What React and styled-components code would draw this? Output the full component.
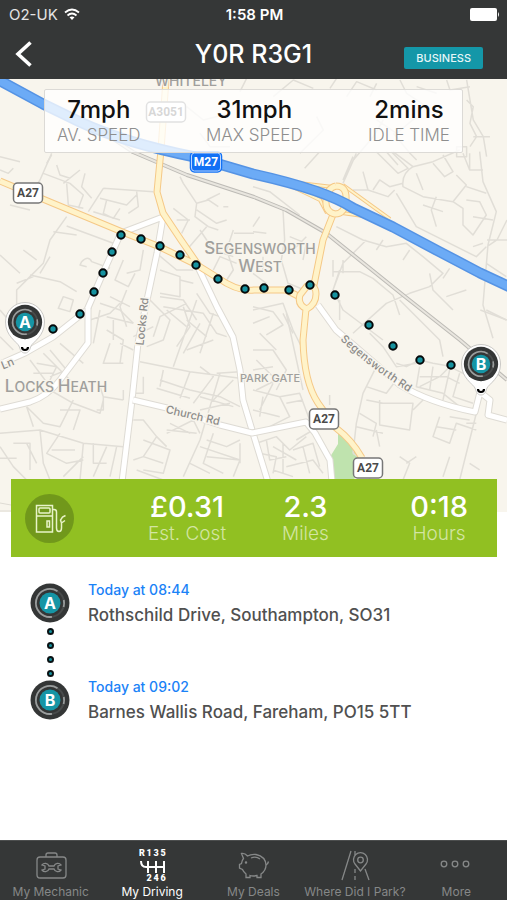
import React from "react";
import styled, { createGlobalStyle } from "styled-components";

const points = [
  [53, 329], [80, 314], [94, 292], [103, 273], [112, 252], [121, 235],
  [141, 239], [160, 246], [180, 255], [196, 265], [218, 279], [245, 289],
  [264, 288], [289, 290], [310, 285], [335, 295], [369, 325], [393, 346],
  [420, 360], [451, 365],
];

// small streets, each tile is drawn at three times the map scale
const tiles = [
  {
    x: 0,
    y: 0,
    d: "M720 275L740 235 M820 290L880 240L940 265 M990 265l20-30 M1040 290l30-45 60 25 M1130 250l-20 40 M1250 260l60 20 M1200 240l20 40 60 40 M1340 240l10 30 60-10 M1400 240l20 120 30 50 10 60 M1400 300l20 20-10 50 20 40-20 30 M1370 440h30v30h-30z M0 470l60 15 M140 490l15-25 M900 460l40-40 30-30-20-40 M1060 480l60-70 30-50 M1180 400l50 60 20 20 M1420 410l50 0 M1130 360l60 40 60-50 M560 320l50 40 80-20 M600 400l30 40 60 0",
  },
  {
    x: 0,
    y: 150,
    d: "M155 10L120 90L95 130 M170 45l10 30 30 10 M130 70l80 30 40 35-15 40 M240 60l-50 40 M0 60l25 10 15-15 M30 165l60 15 M200 100l5 65 45 10 M255 70l-10 40 30 35 M310 115L265 185 M310 115l150 10 M300 145l80 20 30-30 M410 125l5 45-30 20 M320 150l-10 40 30 15 20-30 M280 185l80 25 M200 200L150 270L130 340L90 380L50 420V480 M160 245l70 10 M200 228L340 280 M90 375l90 20 50 30 M0 315l60 55 M150 320l-30 50 M70 300l40 30 M245 335q20-20 30 0l55 20 M245 335l-5 10 20 5 M190 440l30 10-10 35-35-10z M370 330l-25 60 40 20 20-40 M430 300l-10 60-40 10 M480 360l60 20v60l-60-10 M540 390l40 10 M480 440l70 10 40 60 M560 460l-80 40-20 60 M500 480l60 50 M590 430l40 60 30 10 M380 420l-20 50 20 60 M330 440l60 30 M320 500l80 20 M540 80l10 20 40 60 35-10 30 20 M590 160l-5 40 40 30 30 10 M620 150l40-20 M670 170l15 0 M520 175l45 35-20 40 M570 210l-40 0 M600 240l40 60 60 20 M700 240l-20 60 20 60-20 30 M762 250h-60 M560 300l60-70 M640 360l20-40 50 20 M0 480l60 70 M50 400l50-20 M590 180l60 40 30-10 M400 560l60-30 M560 510l60 50 M470 310l60 50 50 0",
  },
  {
    x: 253,
    y: 150,
    d: "M200 5L155 55 M310 10L270 100 M300 20l-30 70 M370 5l65 65 30-15-50-50 M400 5l35 40 M420 5l60 45 60-15 80-35 M540 40l35 40 25-15-30-50 M630 10l20 50 40 0 M650 60l0-50 M330 65l15 55-45 0 M345 120l60 20 20-20 M360 120l20-30 30 20 40-10 M480 50q-35 20-30 60l60 30 90 15 40-50-30-30 M510 120l-20-50 M600 155l30 20 0 50 30 30 40-60-20-40-40-5 M640 110l60 20 M550 140l-15 40 15 50 M510 165l60 20 M660 200l60 10 M680 5l10 90 40 90-25 100-15 180 30 100 M430 130l60 100 180 90 30-30 M762 210l-30 60-30 20 M0 110l50 15 90 70 M20 200l-20 30 M0 245l40 5 M90 180l5 90-10 60 20 70 50 20 M110 260l50 20-10 50 M120 300l40-40 M250 230l80 40 70 20 60-10 50 40 60 50-40 40-60 20-70 30-100 90 M340 270l-70 70-30 80 M240 365h80l40 20 60 50 20 60 M240 330v50 M270 330v40 M260 360l-20 60 30 60 80 60 40 30 M530 370l10 50 60 60 M600 480l-20-20 M580 440l60-20 M570 385l20-30 M450 330l20-30 M370 300l20-30 M0 370l40 30 M700 340l60 40 M700 480l60 30 M762 270l-60 0 M30 320v40 M0 470l60 15 30 40-50 30 M0 520l50-20 M660 290l30-10 M90 490l30 60",
  },
  {
    x: 0,
    y: 300,
    d: "M300 30L280 130 M270 60l60-20 30-30 M300 10l60 20 40 40 M320 90l50 30-10 70 M330 130l-20 60 60 0 M340 60l0 60 M360 130l40 20 M0 110l40 40 M90 180l60 80 M110 190l60 10-20 40 M130 160l80 80 M150 150l50 60-50 20 M180 130l70 60 M100 220l60 0 M450 0l60 60-20 60-50 20 M550 20l20 60-40 60 M590 0L520 200 M490 20l120 20 40 60 30 10 M600 70l-50 90 M640 40l-40 120 M640 120l-80 30 M420 185l150 30 150 20 M480 240l90 30 90 20 60 30 M470 265l100 30 M570 215l-30 80 M490 210l-10 50 M430 230v50h-30 M600 200l40 30-60 80 M660 220L600 420L550 530 M650 220l70-5 M600 290l100 30 M600 330l90-20 M300 260l10 30 60 10 M370 270v30 M310 290l0 40-20 0 M150 270l70 40 80 30 10-40 M220 300l-40 80-50-10-50-50 M180 330l60 0-20 60 M80 320l20 60 M0 400L120 390L250 430L370 440 M120 390l10 100 20 50 M80 430l30 60 M0 440l40 60 40 40 M0 475l50 0 M40 430h50l0 80 M180 400l-40 60 60 30 50-10 M155 450h70 M250 430l-10 110 M280 430v60h40 M320 440l-40 90 M350 440l-20 90 M250 470l-60 60 M400 360l30 0 40 50-40 60-30 10 M430 420l80 30-20 70-60-10 M470 410l30 30 M430 470l60 20 M410 510l80 30 M500 400l80-40 20 40 M510 370l60 30 M500 390l90 10 M620 420l60 20 40-20 M600 440l120 40-20 50 M640 400l-30 90 60 30 M620 470l100 10 M720 430v60 M570 490l60 30 M700 240l-60 60",
  },
  {
    x: 253,
    y: 300,
    d: "M0 30l90-20 30 80 30 60 M0 150l60 0 40 60-30 60 M20 100l50 50 M10 180l60 60-60 30 M0 210l60-10 M0 270l80 20 30 60-60 30 M100 40l50 230 M60 250l-40 80 M0 330l80 20 M80 290l60-10 30 80 M20 350l10-60 M100 310l50-10 M10 430l60-20 40 40 50-40 M40 420l10 60 50-10 M60 440l70 40 M20 460l50 10-10 50 M90 430l0 90 M120 450l60-20 20 70 M100 500l80-20 30 40 M150 440l20 80 M60 510l60 20 M180 390l-50 30 M260 0l0 60 M230 285v30 M440 0l120 120 10 50 M350 100l40 40 40 60 60-10 M430 190l30 10 40-20 40 10 60 10 M370 200l-40 80-20 90-10 90 M340 260l60 20 30-40 M340 300l50 10 90 0-10 80-90-15 0-75 M500 200l-10 60 80 20 50 40 M500 230h80l40 20 M540 200l-10 70 M500 260l60-30 30-30 60 30 M590 210l-20 90 M620 220l-20 70 60 20 M560 350l-20 60 50 20 20-60 60 20 M550 380l60 10 M590 350l60 10 M310 380l80 20 M320 340l50 30-10 40 M370 390l10 50 M300 460l50 30 0 50 M440 470l30 20-20 50 M490 470l-30 20 M680 300l-60 240 M640 370h30 M590 470l-20 60 M650 490l30 20 M520 290l-40 40 M762 60l-80-30",
  },
];

const GlobalStyle = createGlobalStyle`
  * {
    box-sizing: border-box;
  }
  body {
    margin: 0;
    background-color: #ffffff;
    font-family: Inter, "Liberation Sans", sans-serif;
  }
`;

const Dial = () => (
  <>
    <circle r="19.5" fill="#343636" />
    <circle r="14" fill="none" stroke="#484b4b" strokeWidth="2" />
    <path
      d="M2 13.8A14 14 0 1 1 7.5 -11.8 M13.8 -3A14 14 0 0 1 13.6 4"
      fill="none"
      stroke="#9a9d9d"
      strokeWidth="1.8"
    />
    <circle r="10.5" fill="#1695a5" />
  </>
);

const Badge = ({ letter }) => (
  <BadgeIcon viewBox="-20 -20 40 40">
    <Dial />
    <PinText y="6">{letter}</PinText>
  </BadgeIcon>
);

const Pin = ({ x, y, letter }) => (
  <g transform={`translate(${x} ${y})`}>
    <path
      d="M0 31C-4 31-5 27-6 24C-8 20-19.5 14-19.5 0A19.5 19.5 0 0 1 19.5 0C19.5 14 8 20 6 24C5 27 4 31 0 31Z"
      fill="#ffffff"
      stroke="#c9c8c5"
      strokeWidth="1"
    />
    <g transform="scale(0.88)">
      <Dial />
    </g>
    <path d="M-3 25A3 3 0 0 0 3 25" fill="#fff" stroke="#000" strokeWidth="2.2" />
    <PinText y="6">{letter}</PinText>
  </g>
);

const Shield = ({ x, y, width = 29, motorway, children }) => (
  <g transform={`translate(${x} ${y})`}>
    <rect
      x={-width / 2}
      y="-10"
      width={width}
      height="20"
      rx="4"
      fill={motorway ? "#1271f5" : "#ffffff"}
      stroke={motorway ? "#1271f5" : "#777777"}
      strokeWidth="1.5"
    />
    {motorway && (
      <rect x={1 - width / 2} y="-9" width={width - 2} height="18" rx="3" fill="none" stroke="#b9d6ff" />
    )}
    <ShieldText y="4" $light={motorway}>
      {children}
    </ShieldText>
  </g>
);

// area names have a larger capital at the start of each word
const AreaName = ({ x, y, children }) => (
  <AreaText x={x} y={y} $size={14}>
    {children.split(" ").map((word, i) => (
      <React.Fragment key={word}>
        {i > 0 && " "}
        <tspan fontSize="17">{word[0]}</tspan>
        {word.slice(1)}
      </React.Fragment>
    ))}
  </AreaText>
);

const Road = ({ d, kind }) => {
  const looks = {
    motorway: ["#5593e4", 11, "#6cabf6", 8],
    main: ["#f5c886", 7, "#fff3c9", 5],
    slip: ["#f5c886", 4, "#fff3c9", 2],
    white: ["#dedbd4", 7, "#ffffff", 5],
    rail: ["#bdbbb6", 4, "#e9e6df", 2],
  };
  const [edge, edgeWidth, fill, width] = looks[kind];
  return (
    <g fill="none" strokeLinejoin="round">
      <path d={d} stroke={edge} strokeWidth={edgeWidth} />
      <path d={d} stroke={fill} strokeWidth={width} />
    </g>
  );
};

const RouteMap = () => (
  <MapDrawing viewBox="0 79 507 433" role="img" aria-label="Route map">
    <rect y="79" width="507" height="433" fill="#f8f5ed" />
    <path d="M338 432L362 455L354 480H333L330 457L338 444Z" fill="#bfe3ae" />
    {tiles.map(({ x, y, d }) => (
      <path
        key={`${x}-${y}`}
        d={d}
        transform={`translate(${x} ${y}) scale(0.3333)`}
        fill="none"
        stroke="#e1ded7"
        strokeWidth="4.5"
        strokeLinejoin="round"
      />
    ))}
    <path d="M0 511H11 M0 503L11 505" stroke="#dedbd4" fill="none" />
    <Road kind="rail" d="M100 130L133 152L187 175L254 197L286 210L326 233L403 295L460 340L507 380" />
    <Road kind="white" d="M121 233L163 217L157 253L147 300L138 343L132 400L122 482" />
    <Road kind="white" d="M120 235L103 273L87 310L53 337L25 353L0 364" />
    <Road kind="white" d="M88 308V343L60 380Q48 396 30 402L0 409" />
    <Road kind="white" d="M197 265L217 307L233 337L240 370L243 400L252 430L268 482" />
    <Road kind="white" d="M133 400L167 408L220 425L252 433L306 422L315 433L330 460L332 482" />
    <Road kind="white" d="M318 305L336 330L400 385Q430 403 475 412L480 392L490 400L488 415L507 420" />
    <Road kind="slip" d="M290 182L333 187 M343 185L390 219 M293 187L320 200L327 213 M342 213L363 216L395 226" />
    <Road
      kind="main"
      d="M166 79L161 150L157 192L163 213L181 240L199 266 M0 181L50 202L120 231L160 247L197 265L218 278Q238 292 254 290L286 290L300 297 M334 212L323 240L314 285"
    />
    <Road
      kind="main"
      d="M307 286Q316 284 316 294T307 309Q297 305 300 295Z M336 186Q347 186 346 200T335 214Q325 212 326 200T336 186 M306 309L303 340Q304 382 318 403L336 428Q352 440 362 458"
    />
    <Road
      kind="motorway"
      d="M-5 78L43 104L80 122Q125 143 195 157L253 174Q325 190 353 208L393 227L440 252L480 273L510 287"
    />

    <AreaText x="191" y="86" $size={14}>WHITELEY</AreaText>
    <AreaName x={260} y={254}>SEGENSWORTH</AreaName>
    <AreaName x={260} y={272}>WEST</AreaName>
    <AreaName x={56} y={392}>LOCKS HEATH</AreaName>
    <AreaText x="270" y="382" $size={11}>PARK GATE</AreaText>
    <RoadText transform="translate(146 322) rotate(-84)">Locks Rd</RoadText>
    <RoadText transform="translate(192 419) rotate(13)">Church Rd</RoadText>
    <RoadText transform="translate(9 367) rotate(-22)">Ln</RoadText>
    <path id="segensworth" d="M335 335Q366 366 415 396" fill="none" />
    <RoadText>
      <textPath href="#segensworth" startOffset="50%">Segensworth Rd</textPath>
    </RoadText>

    <Shield x={28} y={193}>A27</Shield>
    <Shield x={324} y={419}>A27</Shield>
    <Shield x={368} y={468}>A27</Shield>
    <Shield x={166} y={112} width={39}>A3051</Shield>
    <Shield x={206} y={162} width={31} motorway>M27</Shield>

    {points.map(([x, y]) => (
      <circle key={x} cx={x} cy={y} r="3.7" fill="#16929f" stroke="#05090a" strokeWidth="2" />
    ))}
    <Pin x={25} y={322} letter="A" />
    <Pin x={481} y={364} letter="B" />
  </MapDrawing>
);

const MechanicIcon = () => (
  <TabIcon viewBox="0 0 40 36">
    <rect x="6" y="10" width="29" height="21" rx="3" />
    <path d="M15 10V8Q15 6 17 6H24Q26 6 26 8V10" />
    <path d="M11 18A4 4 0 0 1 18 19H23A4 4 0 0 1 30 18L27 19V22L30 23A4 4 0 0 1 23 22H18A4 4 0 0 1 11 23L14 22V19Z" />
  </TabIcon>
);

const DrivingIcon = () => (
  <TabIcon viewBox="0 0 40 36">
    <path d="M9 14Q9 20 14 20H32 M16 14V26 M24 14V26 M32 14V26" strokeWidth="2" />
    <GearText x="10" y="9">R</GearText>
    <GearText x="17" y="9">1</GearText>
    <GearText x="24" y="9">3</GearText>
    <GearText x="31" y="9">5</GearText>
    <GearText x="17" y="34">2</GearText>
    <GearText x="24" y="34">4</GearText>
    <GearText x="31" y="34">6</GearText>
  </TabIcon>
);

const DealsIcon = () => (
  <TabIcon viewBox="0 0 40 36">
    <path d="M10.5 11.5L8.5 6.5Q12 6 14.5 9Q18 7 23 7.5Q32.5 9.5 33 18Q33 23.5 28 27V30.5H24V28.5Q20 29.5 17 28.5V30.5H13V27Q10.5 25 9.5 22.5L6.5 21V17.5L8.5 16.5Q8.8 13.5 10.5 11.5Z" />
    <path d="M18 11Q23 9 27 12 M33 18Q35 17 35.5 14.5" />
    <circle cx="13" cy="15.5" r="0.6" />
  </TabIcon>
);

const ParkIcon = () => (
  <TabIcon viewBox="0 0 40 36">
    <path d="M16 4L7 33 M20 4V8 M20 22V26 M20 29V33 M30 22L34 33" />
    <path d="M25.5 24L20 17A7 7 0 1 1 31 17Z" />
    <circle cx="25.5" cy="13" r="2.8" />
  </TabIcon>
);

const MoreIcon = () => (
  <TabIcon viewBox="0 0 40 36">
    <circle cx="8" cy="17" r="2.8" />
    <circle cx="19" cy="17" r="2.8" />
    <circle cx="30" cy="17" r="2.8" />
  </TabIcon>
);

const tabs = [
  { name: "My Mechanic", Icon: MechanicIcon },
  { name: "My Driving", Icon: DrivingIcon, active: true },
  { name: "My Deals", Icon: DealsIcon },
  { name: "Where Did I Park?", Icon: ParkIcon },
  { name: "More", Icon: MoreIcon },
];

const App = () => {
  return (
    <Wrapper>
      <GlobalStyle />
      <Header>
        <StatusBar>
          <Carrier>
            O2-UK
            <svg width="16" height="13" viewBox="0 0 16 13" fill="none" stroke="#fff" strokeWidth="1.8">
              <path d="M1 4.5Q8 -1.5 15 4.5 M3.5 7.5Q8 3.5 12.5 7.5" />
              <path d="M8 12L5.5 9.3Q8 7.5 10.5 9.3Z" fill="#fff" stroke="none" />
            </svg>
          </Carrier>
          <Clock>1:58 PM</Clock>
          <Battery width="30" height="13" viewBox="0 0 30 13" fill="#fff">
            <rect width="27" height="13" rx="2" />
            <path d="M28 4Q30 6.5 28 9Z" />
          </Battery>
        </StatusBar>
        <TitleBar>
          <BackButton aria-label="Back">
            <svg width="18" height="26" viewBox="0 0 18 26" fill="none" stroke="#fff" strokeWidth="3.6">
              <path d="M16.5 1.5L4 13L16.5 24.5" />
            </svg>
          </BackButton>
          <Title>Y0R R3G1</Title>
          <TripType>BUSINESS</TripType>
        </TitleBar>
      </Header>

      <MapArea>
        <RouteMap />
        <SpeedPanel>
          <SpeedItem>
            <SpeedValue>7mph</SpeedValue>
            <SpeedLabel>AV. SPEED</SpeedLabel>
          </SpeedItem>
          <SpeedItem>
            <SpeedValue>31mph</SpeedValue>
            <SpeedLabel>MAX SPEED</SpeedLabel>
          </SpeedItem>
          <SpeedItem>
            <SpeedValue>2mins</SpeedValue>
            <SpeedLabel>IDLE TIME</SpeedLabel>
          </SpeedItem>
        </SpeedPanel>
      </MapArea>

      <CostCard>
        <FuelIcon viewBox="0 0 49 49">
          <circle cx="24.5" cy="24.5" r="24.5" fill="#71981b" />
          <g fill="none" stroke="#e8f3c8" strokeWidth="1.5">
            <path d="M11.5 38V11.5H27.5V38Z M11.5 22H27.5" />
            <rect x="14" y="14" width="11" height="5" rx="1" />
            <rect x="22" y="27" width="2.5" height="6" />
            <path d="M27.5 15.5H29Q31.5 15.5 31.5 18V34Q31.5 37.5 34 37.5T36.5 34V29L35.5 26L37.5 23L40.5 21.5 M36.5 29L40 26.5" />
          </g>
        </FuelIcon>
        <CostItems>
          <CostItem>
            <CostValue>£0.31</CostValue>
            <CostLabel>Est. Cost</CostLabel>
          </CostItem>
          <CostItem>
            <CostValue>2.3</CostValue>
            <CostLabel>Miles</CostLabel>
          </CostItem>
        </CostItems>
        <CostItem>
          <CostValue>0:18</CostValue>
          <CostLabel>Hours</CostLabel>
        </CostItem>
      </CostCard>

      <Stops>
        <Stop>
          <Marker>
            <Badge letter="A" />
            <Dots>
              <Dot />
              <Dot />
              <Dot />
              <Dot />
            </Dots>
          </Marker>
          <StopInfo>
            <StopTime>Today at 08:44</StopTime>
            <Address>Rothschild Drive, Southampton, SO31</Address>
          </StopInfo>
        </Stop>
        <Stop>
          <Marker>
            <Badge letter="B" />
          </Marker>
          <StopInfo>
            <StopTime>Today at 09:02</StopTime>
            <Address>Barnes Wallis Road, Fareham, PO15 5TT</Address>
          </StopInfo>
        </Stop>
      </Stops>

      <TabBar>
        {tabs.map(({ name, Icon, active }) => (
          <Tab key={name} href="#" $active={active}>
            <Icon />
            {name}
          </Tab>
        ))}
      </TabBar>
    </Wrapper>
  );
};

export default App;

const Wrapper = styled.div`
  display: flex;
  flex-direction: column;
  min-height: 100vh;
`;
const Header = styled.header`
  background-color: #353737;
  color: #ffffff;
`;
const StatusBar = styled.div`
  display: grid;
  grid-template-columns: 1fr auto 1fr;
  align-items: center;
  height: 28px;
  padding: 0 7px 0 9px;
`;
const Carrier = styled.span`
  display: flex;
  align-items: center;
  gap: 6px;
  font-size: 15px;
  color: #e4e4e4;
`;
const Clock = styled.span`
  font-size: 15px;
  font-weight: 600;
`;
const Battery = styled.svg`
  justify-self: end;
`;
const TitleBar = styled.div`
  display: grid;
  grid-template-columns: 1fr auto 1fr;
  align-items: center;
  height: 51px;
  padding: 0 14px;
`;
const BackButton = styled.button`
  display: flex;
  justify-self: start;
  padding: 0;
  border: none;
  background: none;
`;
const Title = styled.h1`
  margin: 0;
  font-size: 25px;
  font-weight: 500;
`;
const TripType = styled.button`
  align-self: end;
  justify-self: end;
  margin: 0 10px 10px 0;
  padding: 0 12px;
  border: none;
  border-radius: 2px;
  background-color: #1497a8;
  color: #e6f6f8;
  font-family: inherit;
  font-size: 11px;
  font-weight: 500;
  line-height: 22px;
`;

const MapArea = styled.section`
  position: relative;
`;
const MapDrawing = styled.svg`
  display: block;
  width: 100%;
`;
const mapFont = `Inter, "Liberation Sans", sans-serif`;
const AreaText = styled.text`
  font-family: ${mapFont};
  font-size: ${(props) => props.$size}px;
  font-weight: 500;
  text-anchor: middle;
  fill: #a09f9c;
  stroke: #f8f5ed;
  stroke-width: 2px;
  paint-order: stroke;
`;
const RoadText = styled.text`
  font-family: ${mapFont};
  font-size: 11px;
  font-weight: 500;
  text-anchor: middle;
  fill: #8b8a88;
  stroke: #f8f5ed;
  stroke-width: 3px;
  paint-order: stroke;
`;
const ShieldText = styled.text`
  font-family: Roboto, "Liberation Sans", sans-serif;
  font-size: 12px;
  font-weight: 700;
  text-anchor: middle;
  fill: ${(props) => (props.$light ? "#ffffff" : "#4a4a4a")};
`;
const PinText = styled.text`
  font-family: ${mapFont};
  font-size: 16px;
  font-weight: 700;
  text-anchor: middle;
  fill: #ffffff;
`;

const SpeedPanel = styled.div`
  position: absolute;
  top: 10px;
  left: 44px;
  right: 44px;
  display: flex;
  justify-content: space-between;
  padding: 6px 12px;
  border: 1px solid #dcdad6;
  border-radius: 2px;
  background-color: rgba(255, 255, 255, 0.78);
`;
const SpeedItem = styled.div`
  text-align: center;
`;
const SpeedValue = styled.div`
  font-size: 24px;
  font-weight: 500;
  line-height: 28px;
  color: #111111;
`;
const SpeedLabel = styled.div`
  font-size: 17px;
  font-weight: 300;
  line-height: 22px;
  color: #8e8e8e;
`;

const CostCard = styled.section`
  position: relative;
  display: flex;
  align-items: center;
  margin: -33px 10px 0 11px;
  padding: 12px 29px 12px 14px;
  background-color: #91c022;
`;
const FuelIcon = styled.svg`
  width: 49px;
`;
const CostItems = styled.div`
  display: flex;
  gap: 56px;
  margin: 0 auto 0 74px;
`;
const CostItem = styled.div`
  text-align: center;
`;
const CostValue = styled.div`
  font-size: 29px;
  font-weight: 500;
  line-height: 32px;
  color: #ffffff;
`;
const CostLabel = styled.div`
  font-size: 19px;
  font-weight: 300;
  line-height: 22px;
  color: #d3e5a3;
`;

const Stops = styled.ol`
  flex: 1;
  margin: 0;
  padding: 26px 30px;
  list-style: none;
`;
const Stop = styled.li`
  display: flex;
  gap: 18px;
`;
const Marker = styled.div`
  display: flex;
  flex-direction: column;
  align-items: center;
`;
const BadgeIcon = styled.svg`
  display: block;
  width: 40px;
`;
const Dots = styled.div`
  display: flex;
  flex-direction: column;
  gap: 7px;
  padding: 5px 0 3px;
`;
const Dot = styled.span`
  width: 7px;
  height: 7px;
  border: 2px solid #0a1214;
  border-radius: 50%;
  background-color: #16929f;
`;
const StopInfo = styled.div`
  line-height: 24px;
`;
const StopTime = styled.div`
  margin-top: -5px;
  font-size: 14px;
  font-weight: 500;
  color: #1a82f7;
`;
const Address = styled.div`
  font-size: 17px;
  font-weight: 500;
  line-height: 26px;
  color: #505050;
`;

const TabBar = styled.nav`
  display: grid;
  grid-template-columns: repeat(5, 1fr);
  border-top: 1px solid #4c4e4e;
  background-color: #353737;
`;
const Tab = styled.a`
  display: flex;
  flex-direction: column;
  align-items: center;
  padding-top: 6px;
  font-size: 12px;
  line-height: 17px;
  white-space: nowrap;
  text-decoration: none;
  color: ${(props) => (props.$active ? "#ffffff" : "#868888")};
`;
const TabIcon = styled.svg`
  width: 40px;
  fill: none;
  stroke: currentColor;
  stroke-width: 1.3px;
`;
const GearText = styled.text`
  font-family: Roboto, "Liberation Sans", sans-serif;
  font-size: 9px;
  font-weight: 900;
  text-anchor: middle;
  fill: currentColor;
  stroke: none;
`;
